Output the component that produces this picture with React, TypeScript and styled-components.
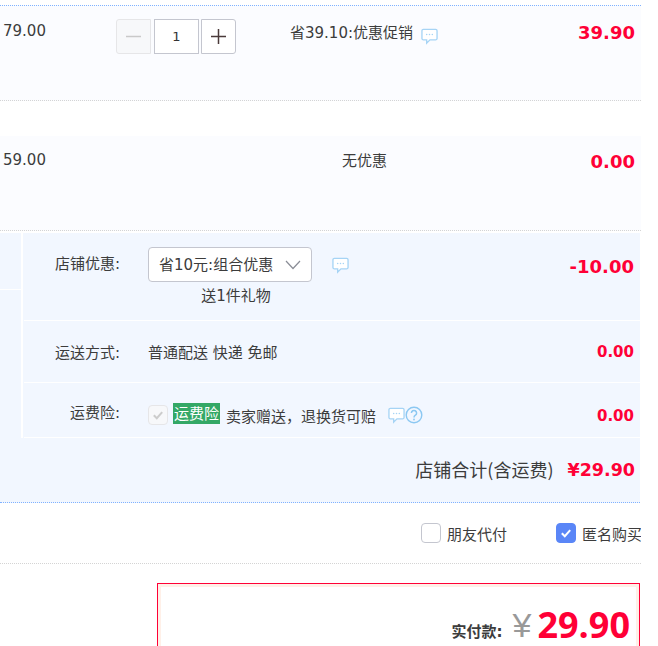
import React from "react";
import styled, { createGlobalStyle } from "styled-components";

const CJK = `"Noto Sans CJK SC", sans-serif`;
const LATIN = `"DejaVu Sans", "Noto Sans CJK SC", sans-serif`;

const GlobalStyle = createGlobalStyle`
  html, body {
    margin: 0;
    padding: 0;
    background: #ffffff;
    overflow: hidden;
  }
  body {
    font-family: ${LATIN};
    font-size: 15px;
    color: #3c3c3c;
  }
`;

const Page = styled.div`
  width: 658px;
  height: 646px;
  overflow: hidden;
  padding-top: 5px;
  box-sizing: border-box;
`;

const Column = styled.div`
  width: 641px;
`;

const ItemRow = styled.div<{ $first?: boolean }>`
  display: grid;
  grid-template-columns: 116px 174px 1fr 110px;
  height: 94px;
  background: #fbfcff;
  border-top: ${(p) => (p.$first ? "1px dotted #80b2ff" : "0")};
  border-bottom: 1px dotted #d4d4d4;
  margin-bottom: ${(p) => (p.$first ? 35 : 2)}px;
`;

const UnitPrice = styled.div<{ $top: number }>`
  padding: ${(p) => p.$top}px 0 0 3px;
  font-size: 15px;
  line-height: 20px;
`;

const Stepper = styled.div`
  display: flex;
  padding-top: 13px;
  align-items: flex-start;
`;

const StepBtn = styled.div<{ $disabled?: boolean; $side: "l" | "r" }>`
  width: 35px;
  height: 35px;
  box-sizing: border-box;
  border: 1px solid ${(p) => (p.$disabled ? "#e6e6e8" : "#c4c6cf")};
  background: ${(p) => (p.$disabled ? "#f7f8fa" : "#ffffff")};
  border-radius: ${(p) => (p.$side === "l" ? "3px 0 0 3px" : "0 3px 3px 0")};
  display: flex;
  align-items: center;
  justify-content: center;
`;

const StepValue = styled.div`
  width: 45px;
  height: 35px;
  margin: 0 2px 0 3px;
  box-sizing: border-box;
  border: 1px solid #c4c6cf;
  background: #ffffff;
  text-align: center;
  font-size: 13px;
  line-height: 33px;
  color: #333333;
`;

const Promo = styled.div<{ $top: number; $indent?: number }>`
  display: flex;
  align-items: flex-start;
  gap: 8px;
  padding: ${(p) => p.$top}px 0 0 ${(p) => p.$indent ?? 0}px;
  line-height: 22px;
`;

const Money = styled.div<{ $size?: number; $top: number }>`
  padding: ${(p) => p.$top}px 6px 0 0;
  text-align: right;
  font-weight: 700;
  font-size: ${(p) => p.$size ?? 18}px;
  line-height: 26px;
  color: #ff0036;
`;

const Shop = styled.div`
  display: grid;
  grid-template-columns: 24px 1fr;
  background: #f2f7ff;
  width: 640px;
`;

const Side = styled.div`
  border-right: 2px solid #ffffff;
  margin-right: 1px;
`;

const SideCell = styled.div`
  height: 56px;
  border-bottom: 1px solid #ffffff;
`;

const Rows = styled.div`
  display: flex;
  flex-direction: column;
`;

const Row = styled.div<{ $h: number }>`
  display: grid;
  grid-template-columns: 96px 1fr 110px;
  column-gap: 28px;
  height: ${(p) => p.$h}px;
  border-bottom: 1px solid #ffffff;
`;

const Label = styled.div<{ $top: number }>`
  padding-top: ${(p) => p.$top}px;
  text-align: right;
  line-height: 22px;
`;

const Body = styled.div<{ $top: number }>`
  padding-top: ${(p) => p.$top}px;
  line-height: 22px;
  display: flex;
  align-items: flex-start;
`;

const SelectGroup = styled.div`
  display: flex;
  flex-direction: column;
  width: 164px;
  margin-right: 20px;
`;

const SelectBox = styled.div`
  height: 35px;
  box-sizing: border-box;
  border: 1px solid #c4c6cf;
  border-radius: 4px;
  background: #ffffff;
  display: flex;
  align-items: center;
  justify-content: space-between;
  padding: 1px 10px 0;
`;

const Gift = styled.div`
  text-align: center;
  line-height: 26px;
  padding: 1px 0 0 12px;
`;

const CheckBox = styled.div<{ $state: "off" | "on" | "disabled" }>`
  width: 20px;
  height: 20px;
  box-sizing: border-box;
  border-radius: 4px;
  display: flex;
  align-items: center;
  justify-content: center;
  flex: none;
  border: 1px solid
    ${(p) => (p.$state === "on" ? "#5a86f7" : p.$state === "off" ? "#c4c6cf" : "#e6e6e8")};
  background: ${(p) =>
    p.$state === "on" ? "#5a86f7" : p.$state === "off" ? "#ffffff" : "#f7f8fa"};
`;

const InsuranceCheck = styled(CheckBox)`
  margin-top: 2px;
`;

const Tag = styled.span`
  display: block;
  margin: 0 6px 0 5px;
  background: #34a866;
  color: #ffffff;
  height: 21px;
  line-height: 22px;
  padding: 0 1px;
  font-size: 15px;
`;

const ClaimText = styled.span`
  margin: 3px 12px 0 0;
  white-space: nowrap;
`;

const Total = styled.div`
  height: 45px;
  width: 635px;
  display: flex;
  justify-content: flex-end;
  align-items: flex-start;
  padding: 19px 5px 0 0;
  gap: 14px;
  background: #f2f7ff;
  border-bottom: 1px dotted #80b2ff;
  font-family: ${CJK};
  font-size: 18px;
  line-height: 24px;
`;

const TotalMoney = styled.span`
  font-family: ${LATIN};
  font-weight: 700;
  font-size: 17.5px;
  margin-top: 1px;
  color: #ff0036;
`;

const Options = styled.div`
  height: 60px;
  width: 220px;
  padding-left: 421px;
  display: flex;
  align-items: center;
  gap: 49px;
  border-bottom: 1px dotted #d4d4d4;
  white-space: nowrap;
  overflow: hidden;
`;

const Option = styled.label`
  display: flex;
  align-items: center;
  gap: 6px;
`;

const PayBox = styled.div`
  margin: 19px 0 0 157px;
  width: 483px;
  height: 120px;
  box-sizing: border-box;
  border: 1px solid #ff0036;
`;

const PayInner = styled.div`
  height: 100%;
  box-sizing: border-box;
  border: 3px solid #fff0e8;
  background: #ffffff;
  display: flex;
  justify-content: flex-end;
  align-items: flex-start;
  padding: 17px 6px 0 0;
`;

const PayLabel = styled.span`
  font-size: 15px;
  font-weight: 700;
  line-height: 20px;
  margin-top: 18px;
`;

const Yen = styled.span`
  font-family: "Liberation Sans", ${CJK};
  font-size: 34px;
  line-height: 42px;
  margin: 0 6px 0 10px;
  color: #999999;
`;

const PayAmount = styled.span`
  font-family: "Open Sans", sans-serif;
  font-weight: 700;
  font-size: 36px;
  line-height: 42px;
  color: #ff0036;
`;

const BubbleSvg = styled.svg<{ $top: number }>`
  flex: none;
  margin-top: ${(p) => p.$top}px;
`;

const Bubble = ({ top = 6 }: { top?: number }) => (
  <BubbleSvg $top={top} width="17" height="17" viewBox="0 0 18 18">
    <path
      d="M2.5 1.5h13a1.5 1.5 0 0 1 1.5 1.5v8a1.5 1.5 0 0 1-1.5 1.5H9.5L6 16v-3.500H2.500A1.500 1.500 0 0 1 1 11V3a1.500 1.500 0 0 1 1.500-1.500z"
      fill="#ffffff"
      stroke="#a6d4f5"
      strokeWidth="1.4"
    />
    <circle cx="6" cy="7" r="0.8" fill="#a6d4f5" />
    <circle cx="9" cy="7" r="0.8" fill="#a6d4f5" />
    <circle cx="12" cy="7" r="0.8" fill="#a6d4f5" />
  </BubbleSvg>
);

const HelpSvg = styled.svg`
  flex: none;
  margin-top: 3px;
`;

const HelpIcon = () => (
  <HelpSvg width="18" height="18" viewBox="0 0 18 18">
    <circle cx="9" cy="9" r="7.8" fill="none" stroke="#8cc8f2" strokeWidth="1.4" />
    <path
      d="M6.400 7a2.600 2.600 0 1 1 4 2.200c-.9.600-1.400 1-1.400 2.200"
      fill="none"
      stroke="#8cc8f2"
      strokeWidth="1.500"
    />
    <circle cx="9" cy="13.500" r="0.9" fill="#8cc8f2" />
  </HelpSvg>
);

const Tick = ({ color }: { color: string }) => (
  <svg width="12" height="12" viewBox="0 0 12 12">
    <path d="M1.800 6.200l3 3 5.400-6" fill="none" stroke={color} strokeWidth="2" />
  </svg>
);

const Chevron = () => (
  <svg width="16" height="10" viewBox="0 0 16 10">
    <path d="M1 1l7 7.500L15 1" fill="none" stroke="#8a8d96" strokeWidth="1.200" />
  </svg>
);

const Minus = () => (
  <svg width="17" height="17" viewBox="0 0 17 17">
    <path d="M1 8.500h15" stroke="#c9c9c9" strokeWidth="1.500" />
  </svg>
);

const Plus = () => (
  <svg width="17" height="17" viewBox="0 0 17 17">
    <path d="M1 8.500h15M8.500 1v15" stroke="#4a3a3a" strokeWidth="1.500" />
  </svg>
);

export default function App() {
  return (
    <Page>
      <GlobalStyle />
      <Column>
        <ItemRow $first>
          <UnitPrice $top={15}>79.00</UnitPrice>
          <Stepper>
            <StepBtn $side="l" $disabled>
              <Minus />
            </StepBtn>
            <StepValue>1</StepValue>
            <StepBtn $side="r">
              <Plus />
            </StepBtn>
          </Stepper>
          <Promo $top={16}>
            省39.10:优惠促销
            <Bubble />
          </Promo>
          <Money $top={14}>39.90</Money>
        </ItemRow>
        <ItemRow>
          <UnitPrice $top={14}>59.00</UnitPrice>
          <div />
          <Promo $top={14} $indent={52}>无优惠</Promo>
          <Money $top={13}>0.00</Money>
        </ItemRow>
        <Shop>
          <Side>
            <SideCell />
          </Side>
          <Rows>
            <Row $h={87}>
              <Label $top={20}>店铺优惠:</Label>
              <Body $top={14}>
                <SelectGroup>
                  <SelectBox>
                    省10元:组合优惠
                    <Chevron />
                  </SelectBox>
                  <Gift>送1件礼物</Gift>
                </SelectGroup>
                <Bubble top={10} />
              </Body>
              <Money $top={21}>-10.00</Money>
            </Row>
            <Row $h={61}>
              <Label $top={21}>运送方式:</Label>
              <Body $top={21}>普通配送 快递 免邮</Body>
              <Money $top={18} $size={15}>0.00</Money>
            </Row>
            <Row $h={54}>
              <Label $top={19}>运费险:</Label>
              <Body $top={20}>
                <InsuranceCheck $state="disabled">
                  <Tick color="#cccccc" />
                </InsuranceCheck>
                <Tag>运费险</Tag>
                <ClaimText>{"卖家赠送\uFF0C退换货可赔"}</ClaimText>
                <Bubble top={4} />
                <HelpIcon />
              </Body>
              <Money $top={20} $size={15}>0.00</Money>
            </Row>
          </Rows>
        </Shop>
        <Total>
          店铺合计(含运费)
          <TotalMoney>¥29.90</TotalMoney>
        </Total>
        <Options>
          <Option>
            <CheckBox $state="off" />
            朋友代付
          </Option>
          <Option>
            <CheckBox $state="on">
              <Tick color="#ffffff" />
            </CheckBox>
            匿名购买
          </Option>
        </Options>
        <PayBox>
          <PayInner>
            <PayLabel>实付款:</PayLabel>
            <Yen>¥</Yen>
            <PayAmount>29.90</PayAmount>
          </PayInner>
        </PayBox>
      </Column>
    </Page>
  );
}
